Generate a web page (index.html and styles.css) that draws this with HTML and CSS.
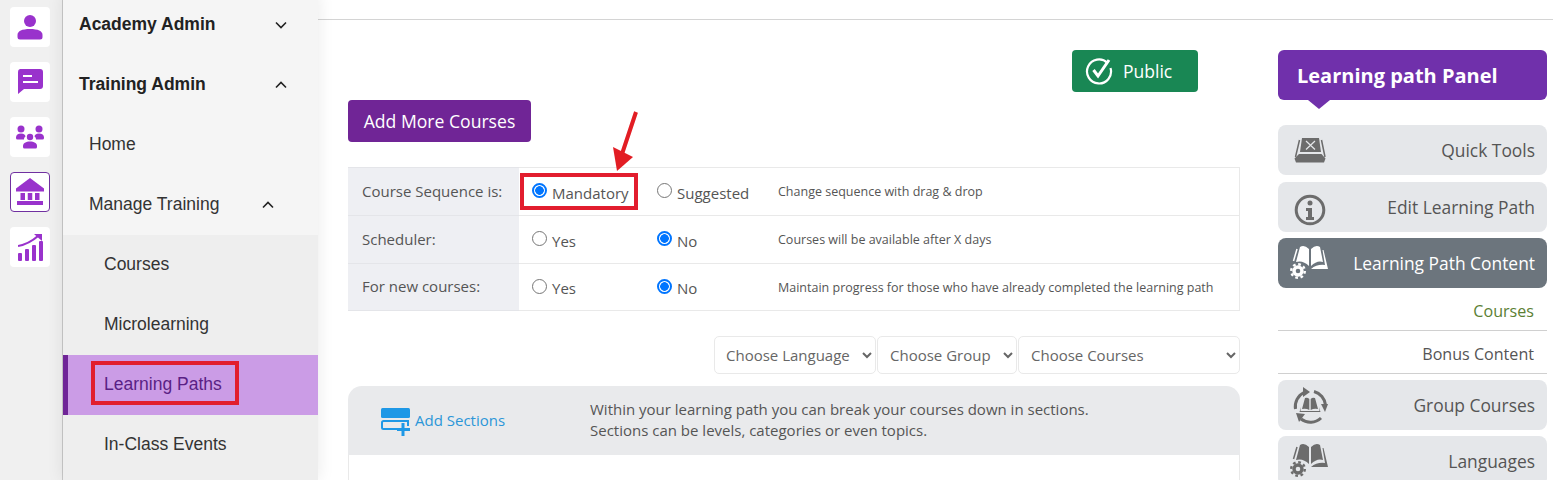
FILE: index.html
```html
<!DOCTYPE html>
<html lang="en">
<head>
    <meta charset="UTF-8">
    <meta name="viewport" content="width=device-width, initial-scale=1.0">
    <title>Learning Path Content</title>
    <link rel="stylesheet" href="styles.css">
</head>
<body>
    <svg class="defs" width="0" height="0">
        <symbol id="book-gear" viewBox="0 0 38 34">
            <path d="M19 4Q14 -1 10 2L6 17Q13 15 19 21Z"/>
            <path d="M21 4Q26 -1 30 2L33 17Q27 15 21 21Z"/>
            <path d="M32.500 5H33.500L38 24H21Q27 19 35 20Z"/>
            <path d="M7 4 3.500 16" fill="none" stroke="currentColor" stroke-width="1.500"/>
            <circle cx="8" cy="26" r="4" fill="none" stroke="currentColor" stroke-width="3.400"/>
            <circle cx="8" cy="26" r="6.800" fill="none" stroke="currentColor" stroke-width="2.400" stroke-dasharray="2.700 2.640"/>
        </symbol>
    </svg>

    <nav class="rail">
        <a class="rail-btn">
            <svg width="26" height="26" viewBox="0 0 26 26"><circle cx="13" cy="7" r="6"/><path d="M0.500 21C0.500 17 5 15 13 15S25.500 17 25.500 21V23A2.500 2.500 0 0 1 23 25.500H3A2.500 2.500 0 0 1 0.500 23Z"/></svg>
        </a>
        <a class="rail-btn">
            <svg width="26" height="26" viewBox="0 0 26 26"><path d="M3 0H23A3 3 0 0 1 26 3V17A3 3 0 0 1 23 20H7L1 25V3A3 3 0 0 1 3 0Z"/><path d="M6 7h9M6 13h15" stroke="#fff" stroke-width="2"/></svg>
        </a>
        <a class="rail-btn">
            <svg width="28" height="24" viewBox="0 0 28 24"><circle cx="5" cy="4" r="3.500"/><circle cx="23" cy="4" r="3.500"/><circle cx="14" cy="12" r="3.200"/><path d="M0 12.500C0 10 2 8.500 5 8.500S9.500 10 9.500 11.500C8.500 12 8 13 8 14.500H1.500A1.500 1.500 0 0 1 0 13Z"/><path d="M28 12.500C28 10 26 8.500 23 8.500S18.500 10 18.500 11.500C19.500 12 20 13 20 14.500H26.500A1.500 1.500 0 0 0 28 13Z"/><path d="M7 21C7 18 10 16.500 14 16.500S21 18 21 21V22A1.500 1.500 0 0 1 19.500 23.500H8.500A1.500 1.500 0 0 1 7 22Z"/></svg>
        </a>
        <a class="rail-btn rail-btn-active">
            <svg width="28" height="28" viewBox="0 0 28 28"><path d="M14 0 28 10.500V13.500H0V10.500Z"/><rect x="4.500" y="15" width="4.500" height="7"/><rect x="11.750" y="15" width="4.500" height="7"/><rect x="19" y="15" width="4.500" height="7"/><rect x="1" y="23" width="26" height="4"/></svg>
        </a>
        <a class="rail-btn">
            <svg width="25" height="28" viewBox="0 0 25 28"><rect x="0" y="20" width="4" height="8" rx="1"/><rect x="7" y="16" width="4" height="12" rx="1"/><rect x="14" y="12" width="4" height="16" rx="1"/><rect x="21" y="8" width="4" height="20" rx="1"/><path d="M0 13Q11 11 20 3" fill="none" stroke="#9932cc" stroke-width="2.200"/><path d="M16 1H24V8Z"/></svg>
        </a>
    </nav>

    <aside class="sidebar">
        <div class="menu-top">
            <a class="menu-item menu-head">Academy Admin
                <svg class="chev chev-head" width="12" height="8" viewBox="0 0 12 8"><path d="M1 1.500 6 6.500 11 1.500"/></svg>
            </a>
            <a class="menu-item menu-head">Training Admin
                <svg class="chev chev-head" width="12" height="8" viewBox="0 0 12 8"><path d="M1 6.500 6 1.500 11 6.500"/></svg>
            </a>
            <a class="menu-item menu-l2">Home</a>
            <a class="menu-item menu-l2">Manage Training
                <svg class="chev chev-l2" width="12" height="8" viewBox="0 0 12 8"><path d="M1 6.500 6 1.500 11 6.500"/></svg>
            </a>
        </div>
        <div class="menu-sub">
            <a class="menu-item menu-l3">Courses</a>
            <a class="menu-item menu-l3">Microlearning</a>
            <a class="menu-item menu-l3 menu-current"><span class="marked">Learning Paths</span></a>
            <a class="menu-item menu-l3">In-Class Events</a>
        </div>
    </aside>

    <main class="page">
        <div class="topbar"></div>
        <div class="columns">
            <section class="content">
                <div class="status-row">
                    <a class="btn-public">
                        <svg width="28" height="28" viewBox="0 0 28 28" fill="none" stroke="#fff"><path d="M22.500 6A12 12 0 1 0 25.500 11" stroke-width="2.200"/><path d="M8.500 13 13 19 24 3" stroke-width="3"/></svg>
                        Public
                    </a>
                </div>
                <a class="btn-add">Add More Courses</a>

                <table class="options">
                    <tr>
                        <th>Course Sequence is:</th>
                        <td class="opt-one">
                            <label class="opt"><input type="radio" name="seq" checked><span>Mandatory</span></label>
                            <span class="callout"></span>
                            <svg class="arrow" width="30" height="62" viewBox="0 0 30 62"><path d="M25 1 11 43" stroke="#e21d24" stroke-width="4"/><path d="M2 36 22 46 6 60Z" fill="#e21d24"/></svg>
                        </td>
                        <td class="opt-two"><label class="opt"><input type="radio" name="seq"><span>Suggested</span></label></td>
                        <td class="hint">Change sequence with drag &amp; drop</td>
                    </tr>
                    <tr>
                        <th>Scheduler:</th>
                        <td class="opt-one"><label class="opt"><input type="radio" name="sch"><span>Yes</span></label></td>
                        <td class="opt-two"><label class="opt"><input type="radio" name="sch" checked><span>No</span></label></td>
                        <td class="hint">Courses will be available after X days</td>
                    </tr>
                    <tr class="row-last">
                        <th>For new courses:</th>
                        <td class="opt-one"><label class="opt"><input type="radio" name="new"><span>Yes</span></label></td>
                        <td class="opt-two"><label class="opt"><input type="radio" name="new" checked><span>No</span></label></td>
                        <td class="hint">Maintain progress for those who have already completed the learning path</td>
                    </tr>
                </table>

                <div class="filters">
                    <select class="filter filter-lang"><option>Choose Language</option></select>
                    <select class="filter filter-group"><option>Choose Group</option></select>
                    <select class="filter filter-courses"><option>Choose Courses</option></select>
                </div>

                <div class="sections">
                    <div class="sections-head">
                        <a class="add-section">
                            <svg width="30" height="28" viewBox="0 0 30 28"><rect x="0" y="0" width="29" height="10" rx="1.500" fill="#1e98e6"/><path d="M18 21H2.500A1.500 1.500 0 0 1 1 19.500V14.500A1.500 1.500 0 0 1 2.500 13H27V18" fill="none" stroke="#1e98e6" stroke-width="2"/><path d="M22 15V28M16 21.500H29" stroke="#1e98e6" stroke-width="3"/></svg>
                            Add Sections
                        </a>
                        <p class="sections-note">Within your learning path you can break your courses down in sections.<br>Sections can be levels, categories or even topics.</p>
                    </div>
                    <div class="sections-body"></div>
                </div>
            </section>

            <aside class="panel">
                <h2 class="panel-title">Learning path Panel</h2>
                <a class="panel-item">
                    <svg class="panel-icon" width="32" height="26" viewBox="0 0 32 26"><path d="M8 1H25L27 15H6Z"/><path d="M12 4 21 12.500M21 4 12 12.500" stroke="#e5e7ea" stroke-width="1.200"/><path d="M5.500 3 1.500 20M27.500 3 31 20" stroke="currentColor" stroke-width="1.500"/><path d="M0.500 21.500 2 25.500H30L31.500 21.500 27.500 17H5Z"/></svg>
                    Quick Tools
                </a>
                <a class="panel-item">
                    <svg class="panel-icon" width="32" height="32" viewBox="0 0 32 32"><circle cx="16" cy="16" r="13.800" fill="none" stroke="currentColor" stroke-width="3"/><circle cx="16" cy="9" r="2.500"/><path d="M12 14H18V23H20V26H12V23H14V17H12Z"/></svg>
                    Edit Learning Path
                </a>
                <a class="panel-item panel-item-active">
                    <svg class="panel-icon panel-icon-book"><use href="#book-gear"/></svg>
                    Learning Path Content
                </a>
                <div class="panel-sub">
                    <a class="panel-link panel-link-current">Courses</a>
                    <a class="panel-link">Bonus Content</a>
                </div>
                <a class="panel-item">
                    <svg class="panel-icon panel-icon-cycle" width="36" height="37" viewBox="0 0 36 37" fill="none" stroke="currentColor" stroke-width="3"><path d="M3.500 22A15.500 15.500 0 0 1 12 5.500"/><path d="M22 4.500A15.500 15.500 0 0 1 33.500 18"/><path d="M29 31A15.500 15.500 0 0 1 9 32"/><path d="M11 0 18 5 11 10Z" fill="currentColor" stroke="none"/><path d="M29 17H36L33 25Z" fill="currentColor" stroke="none"/><path d="M4 26 13 27 7 35Z" fill="currentColor" stroke="none"/><path d="M13 11Q15.500 10 17.300 12V23Q14 21 10 22ZM18.700 12Q20.500 10 23 11L26 22Q22 21 18.700 23ZM9 20 7.500 25H28.500L27 20 27.500 24H8.500Z" fill="currentColor" stroke="none"/></svg>
                    Group Courses
                </a>
                <a class="panel-item">
                    <svg class="panel-icon panel-icon-book"><use href="#book-gear"/></svg>
                    Languages
                </a>
            </aside>
        </div>
    </main>
</body>
</html>
```

FILE: styles.css
```css
* {
    box-sizing: border-box;
}
html, body {
    height: 480px;
    overflow: hidden;
}
body {
    margin: 0;
    display: flex;
    background-color: #fff;
    font-family: "Open Sans", "Liberation Sans", sans-serif;
    color: #555;
}
a {
    text-decoration: none;
}
.defs {
    display: none;
}

/* icon rail */
.rail {
    width: 63px;
    flex-shrink: 0;
    display: flex;
    flex-direction: column;
    gap: 15px;
    padding: 7px 0 0 10px;
    background-color: #f0f0f0;
    border-right: 1px solid #c9c9c9;
}
.rail-btn {
    width: 40px;
    height: 40px;
    display: flex;
    align-items: center;
    justify-content: center;
    background-color: #fff;
    border-radius: 4px;
    fill: #9932cc;
}
.rail-btn-active {
    border: 1px solid #7030a0;
}

/* side menu */
.sidebar {
    width: 255px;
    flex-shrink: 0;
    margin-top: -6px;
    height: 486px;
    display: flex;
    flex-direction: column;
    font-family: "Liberation Sans", Arial, sans-serif;
    font-size: 17.5px;
    color: #222;
    background-color: #eee;
    box-shadow: 0 0 16px rgba(0, 0, 0, 0.09);
    position: relative;
}
.menu-top {
    background-color: #f5f5f5;
    padding-bottom: 1px;
}
.menu-item {
    height: 60px;
    display: flex;
    align-items: center;
    position: relative;
}
.menu-head {
    padding-left: 16px;
    font-weight: bold;
}
.menu-l2 {
    padding-left: 26px;
    color: #333;
}
.menu-l3 {
    padding: 0 0 2px 41px;
    color: #333;
}
.menu-current {
    padding-left: 36px;
    background-color: #cb9ce6;
    border-left: 5px solid #6f2597;
    color: #5a1f85;
}
.marked {
    position: relative;
}
.marked::after {
    content: "";
    position: absolute;
    left: -13px;
    right: -17px;
    top: -13px;
    bottom: -10px;
    border: 4px solid #e21d2e;
}
.chev {
    position: absolute;
    fill: none;
    stroke: #222;
    stroke-width: 1.6;
}
.chev-head {
    left: 212px;
    top: 27px;
}
.chev-l2 {
    left: 199px;
    top: 27px;
}

/* main area */
.page {
    flex: 1;
    min-width: 0;
}
.topbar {
    height: 20px;
    border-bottom: 1px solid #d4d4d4;
}
.columns {
    display: flex;
    gap: 38px;
    padding: 30px 6px 0 30px;
}
.content {
    width: 892px;
    flex-shrink: 0;
}
.status-row {
    display: flex;
    justify-content: flex-end;
    padding-right: 42px;
}
.btn-public {
    width: 126px;
    height: 42px;
    display: flex;
    align-items: center;
    gap: 10px;
    padding-left: 13px;
    background-color: #198754;
    border-radius: 4px;
    color: #fff;
    font-size: 17.5px;
}
.btn-add {
    display: inline-block;
    margin-top: 8px;
    width: 183px;
    height: 42px;
    line-height: 42px;
    text-align: center;
    background-color: #702596;
    border-radius: 4px;
    color: #fff;
    font-size: 17.6px;
}

/* options table */
.options {
    width: 892px;
    margin-top: 25px;
    table-layout: fixed;
    border-collapse: collapse;
    font-size: 15px;
}
.options tr {
    height: 48px;
}
.options .row-last {
    height: 47px;
}
.options th, .options td {
    padding: 2px 0 0 12px;
    border-top: 1px solid #e9e9e9;
    border-bottom: 1px solid #e9e9e9;
    font-weight: normal;
    text-align: left;
}
.options th {
    width: 171px;
    padding: 0 0 2px 14px;
    background-color: #eeeff3;
    border-color: #e4e5e9;
}
.options tr td:last-child {
    border-right: 1px solid #e9e9e9;
}
.options .opt-one {
    width: 126px;
    padding-left: 13px;
    position: relative;
}
.options .opt-two {
    width: 121px;
}
.options .hint {
    padding-top: 0;
    font-size: 12.5px;
}
.opt {
    display: flex;
    align-items: center;
    gap: 5px;
}
.opt input {
    appearance: none;
    width: 15px;
    height: 15px;
    margin: 0;
    position: relative;
    top: -2px;
    background-color: #fff;
    border: 1px solid #767676;
    border-radius: 50%;
}
.opt input:checked {
    border: 2px solid #0075ff;
    background: radial-gradient(circle, #0075ff 0 4px, #fff 4.6px);
}
.callout {
    position: absolute;
    left: 1px;
    top: 5px;
    width: 118px;
    height: 37px;
    border: 4px solid #e21d2e;
}
.arrow {
    position: absolute;
    left: 92px;
    top: -57px;
}

/* filter selects */
.filters {
    display: flex;
    justify-content: flex-end;
    gap: 1px;
    margin-top: 25px;
}
.filter {
    height: 38px;
    padding: 0 6px 0 8px;
    background-color: #fff;
    border: 1px solid #e9e9e9;
    border-radius: 5px;
    color: #666;
    font-family: inherit;
    font-size: 15px;
}
.filter-lang {
    width: 162px;
    padding-left: 7px;
}
.filter-group {
    width: 140px;
}
.filter-courses {
    width: 222px;
}

/* sections box */
.sections {
    margin-top: 12px;
}
.sections-head {
    height: 69px;
    display: flex;
    align-items: center;
    padding-bottom: 2px;
    background-color: #e9eaec;
    border-radius: 14px 14px 0 0;
}
.add-section {
    width: 242px;
    display: flex;
    align-items: center;
    gap: 4px;
    padding-left: 33px;
    color: #2b96d8;
    font-size: 15px;
}
.add-section svg {
    margin-top: 4px;
}
.sections-note {
    margin: 0;
    font-size: 15px;
    line-height: 21px;
}
.sections-body {
    height: 40px;
    border-left: 1px solid #e9e9e9;
    border-right: 1px solid #e9e9e9;
}

/* right panel */
.panel {
    width: 269px;
    flex-shrink: 0;
}
.panel-title {
    position: relative;
    height: 50px;
    margin: 0 0 25px;
    padding-left: 19px;
    line-height: 52px;
    background-color: #7030ab;
    border-radius: 6px;
    color: #fff;
    font-size: 20px;
    font-weight: bold;
}
.panel-title::after {
    content: "";
    position: absolute;
    left: 30px;
    bottom: -9px;
    border-top: 9px solid #7030ab;
    border-left: 11px solid transparent;
    border-right: 11px solid transparent;
}
.panel-item {
    height: 50px;
    margin-bottom: 6px;
    display: flex;
    align-items: center;
    justify-content: flex-end;
    padding-right: 12px;
    position: relative;
    background-color: #e5e7ea;
    border-radius: 8px;
    color: #555;
    fill: #6c6c6c;
    font-size: 17.4px;
}
.panel-title + .panel-item {
    margin-bottom: 7px;
}
.panel-item-active {
    margin-bottom: 0;
    background-color: #6c757d;
    color: #fff;
    fill: #fff;
}
.panel-icon {
    position: absolute;
    left: 16px;
    top: 12px;
    color: #6c6c6c;
}
.panel-icon-book {
    left: 12px;
    top: 7px;
    width: 38px;
    height: 34px;
}
.panel-icon-cycle {
    left: 14px;
    top: 7px;
}
.panel-item-active .panel-icon {
    color: #fff;
}
.panel-sub {
    margin-bottom: 6px;
}
.panel-link {
    display: block;
    height: 43px;
    padding: 12px 13px 0 0;
    text-align: right;
    border-bottom: 1px solid #d0d0d0;
    font-size: 16.1px;
    color: #555;
}
.panel-link-current {
    color: #5b8033;
}
```
